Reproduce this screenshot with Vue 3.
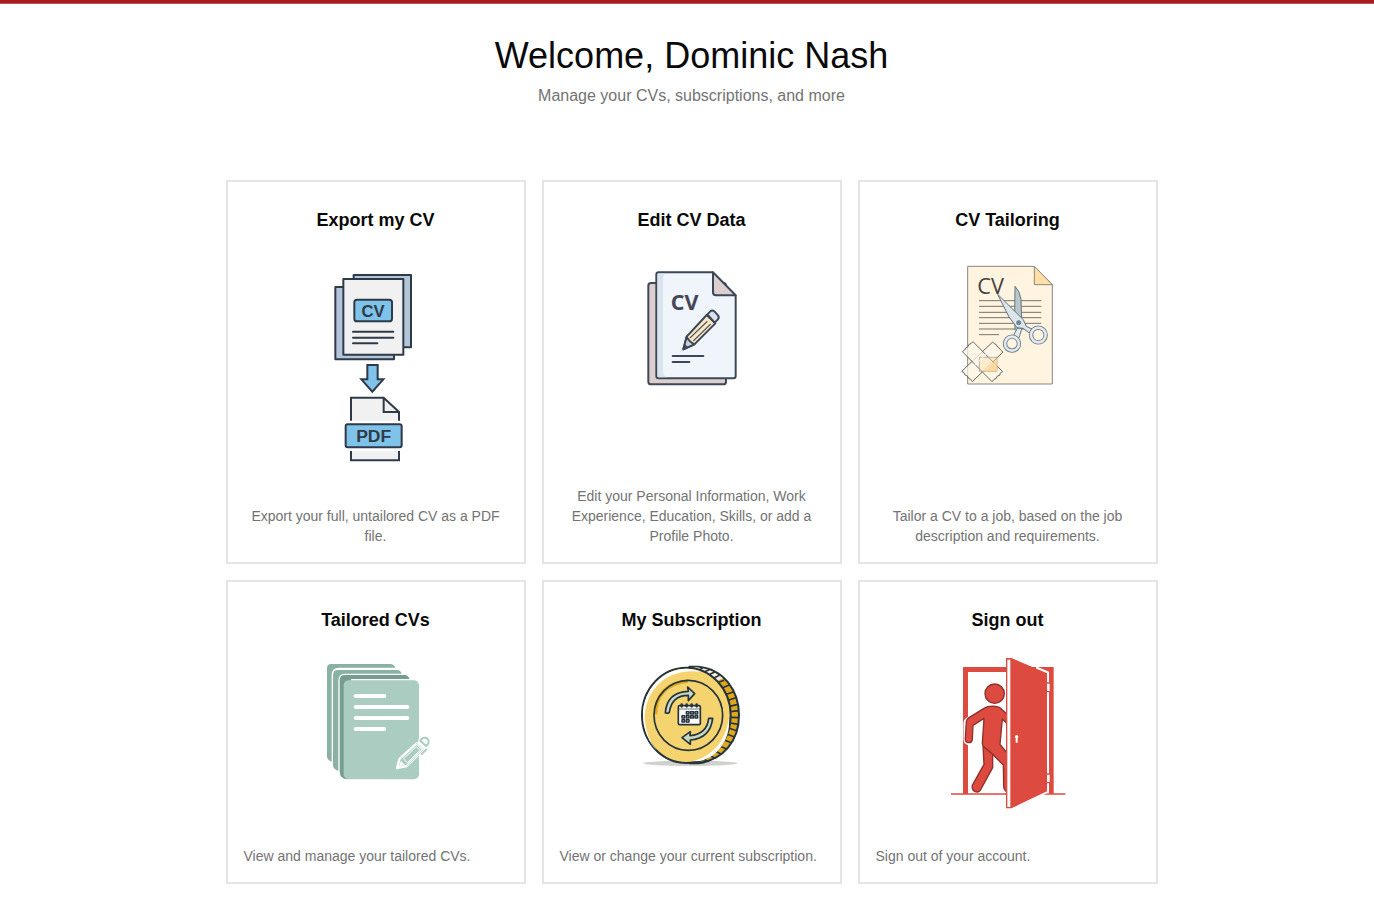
<script setup>
const cards = [
  { id: 'export', title: 'Export my CV', text: 'Export your full, untailored CV as a PDF file.', box: '-147 -48 600 660', h: 220 },
  { id: 'edit', title: 'Edit CV Data', text: 'Edit your Personal Information, Work Experience, Education, Skills, or add a Profile Photo.', box: '-129 -48 600 660', h: 220 },
  { id: 'tailor', title: 'CV Tailoring', text: 'Tailor a CV to a job, based on the job description and requirements.', box: '-126 -36 600 660', h: 220 },
  { id: 'list', title: 'Tailored CVs', text: 'View and manage your tailored CVs.', box: '-117 -27 600 510', h: 170, left: true },
  { id: 'coin', title: 'My Subscription', text: 'View or change your current subscription.', box: '-114 -27 600 510', h: 170, left: true },
  { id: 'exit', title: 'Sign out', text: 'Sign out of your account.', box: '-96 -12 600 510', h: 170, left: true },
]
const calendarCells = [[169, 170], [182, 170], [195, 170], [156, 182], [169, 182], [182, 182], [195, 182], [156, 194], [169, 194]]
</script>

<template>
  <main class="page">
    <header class="intro">
      <h1>Welcome, Dominic Nash</h1>
      <p>Manage your CVs, subscriptions, and more</p>
    </header>
    <section class="grid">
      <a v-for="c in cards" :key="c.id" class="card">
        <h2>{{ c.title }}</h2>
        <svg class="art" width="200" :height="c.h" :viewBox="c.box" fill="none" stroke-linejoin="round">
          <g v-if="c.id === 'export'" stroke="#2f3a48" stroke-width="6">
            <path d="M86 39H258V256H86z" fill="#b3c5d9" />
            <path d="M31 75H207V292H31z" fill="#b3c5d9" />
            <path d="M55 51H235V278H55z" fill="#f1f1f1" />
            <rect x="88" y="113" width="113" height="65" rx="8" fill="#7fc2ea" />
            <path d="M84 209H205M84 227H205M84 244H157" stroke-linecap="round" />
            <text x="144" y="165" class="bold" font-size="50">CV</text>
            <path d="M127 309H158V352H175L142 389L109 352H127z" fill="#7fc2ea" stroke-linejoin="miter" />
            <path d="M78 476V407H176L222 450V476z" fill="#f1f1f1" stroke="none" />
            <path d="M78 476V407H176L222 450V476M176 407V450H222" stroke-linejoin="miter" />
            <path d="M78 567V595H222V567" fill="#f1f1f1" stroke-linejoin="miter" />
            <rect x="62" y="487" width="168" height="69" rx="6" fill="#7fc2ea" />
            <text x="146" y="540" class="bold" font-size="52" textLength="105" lengthAdjust="spacingAndGlyphs">PDF</text>
          </g>
          <g v-else-if="c.id === 'edit'" stroke="#3c4858" stroke-width="6">
            <rect x="40" y="63" width="233" height="304" rx="8" fill="#dccfce" />
            <path d="M71 31H234L302 100V342Q302 349 295 349H71Q64 349 64 342V38Q64 31 71 31z" fill="#f0f5fc" />
            <path d="M68 35H92Q84 38 84 50V330Q85 342 97 346H68z" fill="#dae4ed" stroke="none" />
            <path d="M234 31L302 100H243Q234 100 234 91z" fill="#dccfce" />
            <text x="149" y="144" class="noto" font-size="64" textLength="83" lengthAdjust="spacingAndGlyphs">CV</text>
            <path d="M113 282H205M113 300H163" stroke-linecap="round" />
            <g stroke-linecap="round">
              <path d="M155 224L215 159L241 184L178 247L145 262z" fill="#fae6c5" />
              <path d="M155 224Q162 239 178 247L145 262z" fill="#ccd3dd" />
              <path d="M217 157L226 148Q232 143 239 149L249 160Q254 166 248 173L239 182z" fill="#dce2ea" />
              <path d="M166 227L216 179M176 236L226 187" stroke-width="3.5" />
              <path d="M145 262L149 247L158 255z" fill="#3c4858" stroke-width="2" />
            </g>
          </g>
          <g v-else-if="c.id === 'tailor'">
            <path d="M53 25H253L307 80V378H53z" fill="#fef4e0" stroke="#8b867e" stroke-width="3" />
            <path d="M253 25V80H307z" fill="#ffdfa5" stroke="#8b867e" stroke-width="3" />
            <path d="M87 128H274M87 145H274M87 163H274M87 179H274M87 196H274M87 213H274M87 230H147" stroke="#77736c" stroke-width="3" />
            <text x="122" y="107" class="thin" font-size="64" textLength="80" lengthAdjust="spacingAndGlyphs">CV</text>
            <g stroke="#65747c" stroke-width="3">
              <path d="M195 85Q210 100 213 124L215 193L203 222L195 214L194 179z" fill="#b9c8cd" />
              <path d="M202 211L216 210L209 233Q208 239 204 244L190 233z" fill="#e4ebf0" />
              <path d="M143 109L220 185L229 205L246 213L238 225L219 211L201 209L177 177z" fill="#dce5ec" />
              <circle cx="186" cy="257" r="21" stroke-width="13" /><circle cx="186" cy="257" r="21" stroke="#e2e9f0" stroke-width="8" />
              <circle cx="265" cy="231" r="22" stroke-width="13" /><circle cx="265" cy="231" r="22" stroke="#e2e9f0" stroke-width="8" />
              <circle cx="206" cy="194" r="6" fill="#8198aa" /><path d="M203 194h6" />
            </g>
            <g fill="#fef7e8" fill-opacity=".7" stroke="#5f5d59" stroke-width="2.8">
              <path d="M128 252L134 258L138 259L141 265L147 269L151 275L159 282L67 371L62 364L56 361L52 354L45 351L42 344L35 340z" />
              <path d="M69 251L158 341L151 345L149 352L142 354L139 361L132 364L126 371L37 281L44 276L47 270L54 266L57 259L63 257z" />
            </g>
            <path d="M88 298H141V340H88z" fill="#ffdca0" fill-opacity=".4" stroke="#aaa59c" stroke-width="2.5" />
            <path d="M141 303V340H104z" fill="#ffd58d" opacity=".8" />
            <path d="M66 331L126 271" stroke="#fff" stroke-width="3" />
          </g>
          <g v-else-if="c.id === 'list'">
            <path d="M49 27H226Q236 27 241 38H72Q50 38 50 60V320Q36 316 36 304V40Q36 27 49 27z" fill="#8ab1a3" />
            <path d="M70 45H246Q256 45 260 56H90Q70 56 70 78V348Q54 342 54 331V61Q54 45 70 45z" fill="#8ab1a3" />
            <path d="M90 60H268Q280 60 284 73H108L98 373Q74 373 74 349V76Q74 60 90 60z" fill="#769e90" />
            <path d="M108 76V72H286V76" fill="#fff" />
            <rect x="86" y="76" width="226" height="297" rx="15" fill="#abcdc1" />
            <path d="M122 123H208M122 156H277M122 189H277M122 222H208" stroke="#fff" stroke-width="12" stroke-linecap="round" />
            <g stroke-linecap="round">
              <path d="M312 250L322 243Q334 239 344 252Q349 264 340 274L342 285L318 307L300 290z" fill="#fff" />
              <path d="M305 265L325 284L275 333L246 339L254 311z" fill="#abcdc1" stroke="#fff" stroke-width="7" />
              <path d="M266 311L304 275L315 286L278 322z" stroke="#fff" stroke-width="3" />
              <path d="M258 318L269 330L252 333z" fill="#fff" />
              <path d="M303 264L325 284L276 333" stroke="#abcdc1" stroke-width="2" />
              <path d="M316 257Q326 243 337 251Q347 262 333 273zM334 283L320 297" stroke="#abcdc1" stroke-width="6" />
            </g>
          </g>
          <g v-else-if="c.id === 'coin'">
            <ellipse cx="181" cy="325" rx="142" ry="8" fill="#d0d0ce" />
            <path d="M178 35H205C280 42 327 105 327 181C327 258 280 315 205 325H178z" fill="#dfa919" stroke="#26333c" stroke-width="6" />
            <path d="M190 37C230 38 255 51 279 70L263 77Q235 49 190 37z" fill="#f5f1df" />
            <path d="M203 48L219 38M220 52L238 44M235 60L254 51M248 71L268 61M260 84L282 76M274 100L298 90M286 119L309 111M294 136L318 128M299 154L324 148M302 170L327 167M303 187L327 188M300 204L326 208M298 220L322 228M292 238L314 246M283 255L305 264M270 274L292 283M256 289L275 298M239 302L257 310M220 313L234 319" stroke="#26333c" stroke-width="5" />
            <ellipse cx="169" cy="181" rx="133" ry="143" fill="#f5d36f" stroke="#26333c" stroke-width="6" />
            <path d="M39 180C38 102 103 40 169 41C185 41 202 45 215 51C110 36 46 106 44 188Q47 246 80 286C58 264 39 224 39 180zM188 319C253 303 291 247 296 190C304 240 270 306 210 318z" fill="#fff" />
            <path d="M77 178Q77 89 174 78" stroke="#dfa919" stroke-width="10" />
            <ellipse cx="175" cy="181" rx="103" ry="105" stroke="#26333c" stroke-width="5" />
            <g fill="#c7d8c5" stroke="#26333c" stroke-width="5">
              <path d="M106 173Q111 111 175 109L173 96L194 116L175 137V121Q125 121 118 172Q113 177 106 173z" />
              <path d="M236 190Q231 237 180 242L181 230L156 248L181 268V255Q241 250 248 190z" />
            </g>
            <rect x="145" y="152" width="66" height="57" rx="4" fill="#fff" stroke="#26333c" stroke-width="5" />
            <path d="M145 162H211" stroke="#26333c" stroke-width="2" />
            <path d="M155 149V154M170 149V154M185 149V154M200 149V154" stroke="#26333c" stroke-width="8" stroke-linecap="round" />
            <rect v-for="(p, i) in calendarCells" :key="i" :x="p[0]" :y="p[1]" width="8" height="7" stroke="#26333c" stroke-width="4.5" />
          </g>
          <g v-else>
            <path d="M33 432H376" stroke="#dc4a40" stroke-width="5" />
            <path d="M69 51H341V432H326V66H84V432H69z" fill="#dc4a40" />
            <path d="M84 429H196V440H84z" fill="#fff" />
            <path d="M84 432H198" stroke="#dc4a40" stroke-width="5" />
            <path d="M87 269V218L138 183" stroke="#fff" stroke-width="33" stroke-linecap="round" />
            <g fill="#dc4a40" stroke="#8d302c" stroke-width="4">
              <path d="M129 287L132 343L97 406Q94 424 111 426Q119 426 123 417L158 353V300z" />
              <path d="M132 175Q151 163 178 172Q192 184 205 197V225L187 207L180 283L201 309V426Q191 420 191 408L190 345L153 308Q126 290 127 280L132 205L99 226L97 268Q96 278 86 278Q75 277 76 266L79 214Q80 208 87 203z" />
              <circle cx="164" cy="131" r="29" />
            </g>
            <path d="M288 49L327 65V430H320L285 448z" fill="#fff" />
            <path d="M198 24H214L321 70V424L214 475H198z" fill="#dc4a40" />
            <path d="M202 29H211V471H202z" fill="#fff" />
            <path d="M319 97H330V127H319zM319 370H330V400H319z" fill="#dc4a40" />
            <path d="M321 101H329V123H321zM321 374H329V396H321z" fill="#fff" />
            <circle cx="230" cy="260" r="5" fill="#fff" /><path d="M230 258V278" stroke="#fff" stroke-width="6" />
          </g>
        </svg>
        <p :class="{ left: c.left }">{{ c.text }}</p>
      </a>
    </section>
  </main>
</template>

<style>
body { background: #fff; overflow: hidden; }
</style>

<style scoped>
.page {
  box-sizing: border-box;
  height: 898px;
  padding-left: 9px;
  border-top: 3px solid #a91d20;
  font-family: "Liberation Sans", Arial, sans-serif;
  color: #0a0a0a;
}
.intro { margin-left: -9px; padding: 32px 0 0 9px; border-top: 1px solid #bd5053; text-align: center; }
h1 { margin: 0; font-size: 36px; line-height: 40px; font-weight: 400; }
.intro p { margin: 8px 0 0; font-size: 16px; line-height: 24px; color: #737373; }
.grid {
  display: grid;
  grid-template-columns: repeat(3, 300px);
  grid-template-rows: 384px 304px;
  gap: 16px;
  justify-content: center;
  margin-top: 72px;
}
.card {
  box-sizing: border-box;
  display: flex;
  flex-direction: column;
  align-items: center;
  padding: 24px 16px 16px;
  border: 2px solid #e5e5e5;
}
h2 { margin: 0 0 12px; font-size: 18px; line-height: 28px; font-weight: 700; }
.art { display: block; flex: none; }
.card p { margin: auto 0 0; width: 264px; font-size: 14px; line-height: 20px; text-align: center; color: #737373; }
.card p.left { text-align: left; }
text { text-anchor: middle; stroke: none; }
.bold { font-family: "Liberation Sans", sans-serif; font-weight: 700; fill: #2f3a48; }
.noto { font-family: "Open Sans", sans-serif; font-weight: 700; fill: #454657; }
.thin { font-family: "Open Sans", sans-serif; font-weight: 400; fill: #45413e; }
</style>
